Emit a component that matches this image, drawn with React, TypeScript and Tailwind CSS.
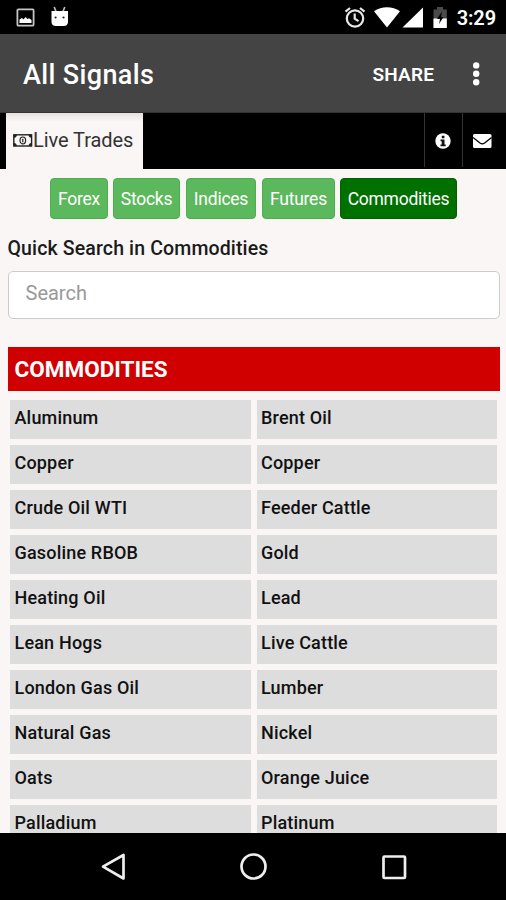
const categories = [
  { label: 'Forex', width: 'w-[58px]', gap: '' },
  { label: 'Stocks', width: 'w-[67px]', gap: 'ml-[5px]' },
  { label: 'Indices', width: 'w-[70px]', gap: 'ml-1.5' },
  { label: 'Futures', width: 'w-[73px]', gap: 'ml-1.5' },
  { label: 'Commodities', width: 'w-[117px]', gap: 'ml-[5px]', active: true },
];

const commodities = [
  'Aluminum', 'Brent Oil',
  'Copper', 'Copper',
  'Crude Oil WTI', 'Feeder Cattle',
  'Gasoline RBOB', 'Gold',
  'Heating Oil', 'Lead',
  'Lean Hogs', 'Live Cattle',
  'London Gas Oil', 'Lumber',
  'Natural Gas', 'Nickel',
  'Oats', 'Orange Juice',
  'Palladium', 'Platinum',
];

function StatusBar() {
  return (
    <div className="flex h-[34px] shrink-0 items-center bg-black pl-4 pr-[10px] text-white">
      <svg className="mt-px h-5 w-5" viewBox="0 0 20 20">
        <rect x="1.4" y="1.4" width="16.2" height="16.2" rx="1" fill="none" stroke="#c4c4c4" strokeWidth="1.8" />
        <path d="M3.5 15v-3.500L6 10l1.500 1.500L9.500 9l2 2 1.500-.7 2.500 1.700v3z" fill="#fff" />
      </svg>
      <svg className="ml-[14px] h-[22px] w-5" viewBox="0 0 20 22">
        <path d="M4.2 1 6 5.5M14.8 1 13 5.5" stroke="#bbb" strokeWidth="1.7" fill="none" />
        <path d="M1.5 5H18v10.5q0 4.5-4.5 4.500H6q-4.500 0-4.500-4.500z" fill="#fff" />
        <circle cx="5.6" cy="11.5" r="1.1" fill="#222" />
        <circle cx="13.5" cy="11.5" r="1.1" fill="#222" />
      </svg>
      <svg className="ml-auto h-[22px] w-[22px]" viewBox="0 0 22 22" fill="none" stroke="#e8e8e8" strokeWidth="2.2">
        <circle cx="11" cy="12.5" r="8.200" />
        <path d="M1.5 5.700 6 2M20.500 5.700 16 2M10.700 7.500v5.200l3.800 2.400" />
      </svg>
      <svg className="ml-2 h-[22px] w-[26px]" viewBox="0 0 26 22">
        <path d="M0 5.2C7.5-.2 18.500-.2 26 5.2L13 21.500z" fill="#fff" />
      </svg>
      <svg className="ml-[2px] h-[22px] w-[21px]" viewBox="0 0 21 22">
        <path d="M21 1.500v20H.5z" fill="#fff" />
      </svg>
      <svg className="ml-2.5 h-[22px] w-[15px]" viewBox="0 0 15 22">
        <path d="M.5 3.500H4V1h6v2.500h3.800v18H.5z" fill="#4a4a4a" />
        <path d="M.5 12.500h13.300V22H.5z" fill="#fff" />
        <path d="M9 5.500 4 13h3l-1 5 4.500-7H8z" fill="#000" />
      </svg>
      <span className="ml-[9px] pt-0.5 text-[20px] leading-none font-semibold tracking-[-0.1px]">3:29</span>
    </div>
  );
}

function AppBar() {
  return (
    <header className="flex h-[79px] shrink-0 items-center border-b border-[#333] bg-[#444] pl-[23px] pr-[21px] text-white">
      <h1 className="pt-[3px] text-[27px] leading-8 font-medium tracking-[0.36px]">All Signals</h1>
      <button className="ml-auto pt-[3px] text-[19px] leading-6 font-semibold tracking-[0.15px]">SHARE</button>
      <svg className="ml-[34px] mt-0.5 h-6 w-[17px]" viewBox="0 0 17 24" fill="#fff">
        <circle cx="8.2" cy="3.4" r="3.2" />
        <circle cx="8.2" cy="11.8" r="3.2" />
        <circle cx="8.2" cy="20.2" r="3.2" />
      </svg>
    </header>
  );
}

function Tabs() {
  return (
    <nav className="flex h-14 shrink-0 bg-black pl-1.5">
      <div className="flex w-[137px] items-center bg-linear-to-b from-[#e6e1e1] to-[#f9f6f5] to-15% pl-[6.5px] pb-[3px] text-[#333]">
        <svg className="mt-0.5 h-[13px] w-5" viewBox="0 0 20 13" fill="none" stroke="#222">
          <rect x=".8" y=".8" width="17.8" height="11.2" strokeWidth="1.4" />
          <path d="M1 1h2.500q0 2.500-2.500 2.500zM18.400 1h-2.500q0 2.500 2.500 2.500zM1 11.800h2.500q0-2.500-2.500-2.500zM18.400 11.800h-2.500q0-2.500 2.500-2.500z" fill="#222" strokeWidth=".6" />
          <ellipse cx="9.8" cy="6.4" rx="2.8" ry="3.4" strokeWidth="1.2" />
          <path d="M9.800 4.700v3.500" strokeWidth="1.2" />
        </svg>
        <span className="ml-[.5px] text-[20px] leading-6 tracking-[-0.06px]">Live Trades</span>
      </div>
      <div className="ml-auto flex h-[54px] w-[38px] items-center justify-center border-l border-[#333] pt-[2px] pr-0.5">
        <svg className="h-4 w-4" viewBox="0 0 16 16">
          <circle cx="8" cy="8" r="7.7" fill="#fff" />
          <path d="M6.800 2.800h2.600v2.400H6.800zM5.500 6.500h4v5h1.200v1.700H5.500v-1.700h1.200V8.200H5.500z" fill="#111" />
        </svg>
      </div>
      <div className="flex h-[54px] w-[44px] items-center border-l border-[#333] pl-[10px] pt-px">
        <svg className="h-[14px] w-[19px]" viewBox="0 0 19 14">
          <rect width="18.5" height="14" rx="1.5" fill="#fff" />
          <path d="M0 3.500 7 9q2.300 1.700 4.600 0l7-5.500" fill="none" stroke="#000" strokeWidth="1.3" />
        </svg>
      </div>
    </nav>
  );
}

function NavigationBar() {
  return (
    <div className="flex h-[67px] shrink-0 items-center bg-black pl-[100px]">
      <svg className="h-7 w-[26px]" viewBox="0 0 26 28" fill="none" stroke="#eee" strokeWidth="2.7" strokeLinejoin="round">
        <path d="M23.500 2v23.500L3 13.700z" />
      </svg>
      <svg className="ml-[113px] h-7 w-7" viewBox="0 0 28 28" fill="none" stroke="#eee" strokeWidth="2.7">
        <circle cx="14.5" cy="13.5" r="12" />
      </svg>
      <svg className="ml-[114px] h-[26px] w-[26px]" viewBox="0 0 26 26" fill="none" stroke="#eee" strokeWidth="2.7">
        <rect x="2.5" y="2.5" width="21.5" height="21.5" rx="1" />
      </svg>
    </div>
  );
}

export default function App() {
  return (
    <div className="flex h-[900px] w-[506px] flex-col overflow-hidden bg-[#f9f6f5] font-[Roboto,sans-serif]">
      <StatusBar />
      <AppBar />
      <Tabs />
      <main className="min-h-0 flex-1 overflow-hidden pt-[9px]">
        <div className="flex pl-[50px]">
          {categories.map((c) => (
            <button
              key={c.label}
              className={`${c.width} ${c.gap} h-[41px] shrink-0 rounded-[4px] border pt-px text-[17.5px] tracking-[-0.25px] whitespace-nowrap text-white ${
                c.active ? 'border-[#006000] bg-[#007000]' : 'border-[#4cae4c] bg-[#5cb85c]'
              }`}
            >
              {c.label}
            </button>
          ))}
        </div>
        <label
          htmlFor="search"
          className="mt-4 ml-[7.5px] block text-[19.5px] leading-7 font-medium tracking-[0.14px] text-[#1a1a1a]"
        >
          Quick Search in Commodities
        </label>
        <input
          id="search"
          placeholder="Search"
          className="mt-2 ml-[7.5px] block h-12 w-[492px] rounded-[5px] border-[1.5px] border-[#ccc] bg-white px-[17px] pb-1 text-[20px] placeholder:text-[#999]"
        />
        <h2 className="mt-7 ml-[7.5px] h-11 w-[492px] bg-[#d10000] pl-[7px] text-[22.5px] leading-[44px] font-bold text-white">
          COMMODITIES
        </h2>
        <div className="mt-[9px] ml-[10px] grid w-[487px] grid-cols-2 gap-x-1.5 gap-y-1.5">
          {commodities.map((name, i) => (
            <div key={i} className="h-[39px] bg-[#ddd] pl-[4.5px] text-[18px] leading-9 font-medium tracking-[0.18px] text-[#111]">
              {name}
            </div>
          ))}
        </div>
      </main>
      <NavigationBar />
    </div>
  );
}
